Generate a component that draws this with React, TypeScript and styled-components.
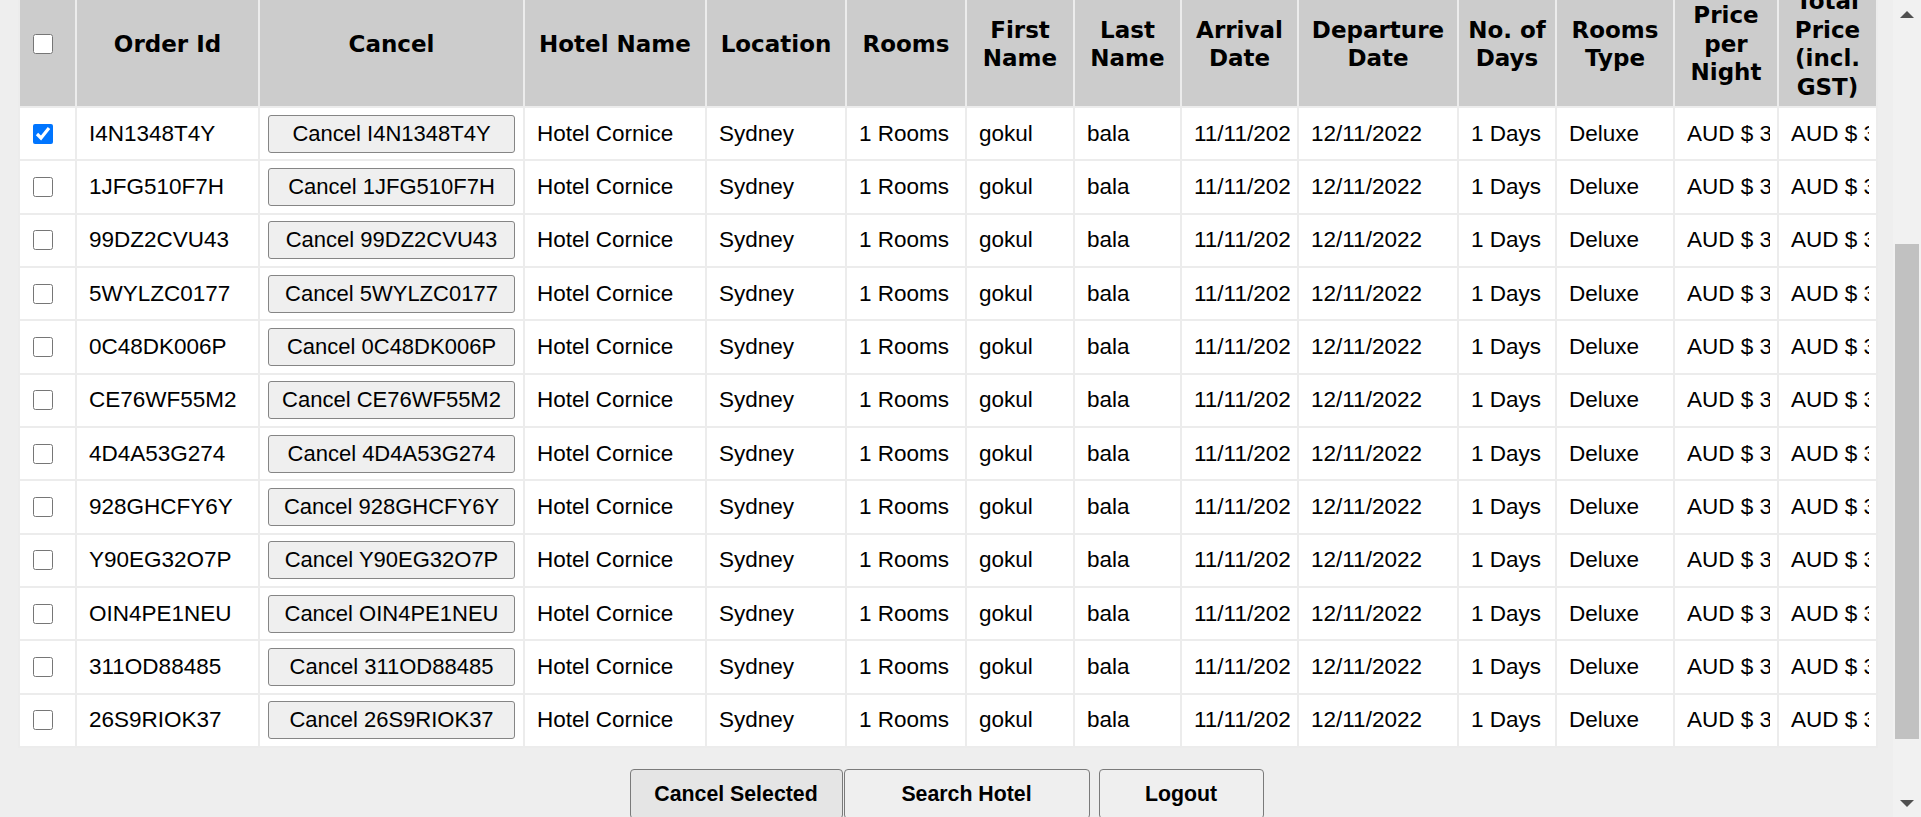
import React, { useLayoutEffect, useRef, useState } from "react";
import styled, { createGlobalStyle } from "styled-components";

const GlobalStyle = createGlobalStyle`
  html, body {
    margin: 0;
    padding: 0;
    height: 100%;
    overflow: hidden;
    background: #eeeeee;
  }
  #root { height: 100%; }
  * { box-sizing: border-box; }
`;

const Page = styled.div`
  display: flex;
  height: 100vh;
  background: #eeeeee;
  font-family: "Liberation Sans", Arial, sans-serif;
  color: #000;
`;

const Viewport = styled.div`
  flex: 1;
  min-width: 0;
  height: 100%;
  overflow-y: scroll;
  overflow-x: hidden;
  scrollbar-width: none;
  &::-webkit-scrollbar {
    display: none;
  }
`;

const Rail = styled.div`
  flex: none;
  width: 28px;
  height: 100%;
  display: flex;
  flex-direction: column;
  background: #f1f1f1;
`;

const RailButton = styled.div`
  flex: none;
  height: 28px;
  display: flex;
  align-items: center;
  justify-content: center;
`;

const Track = styled.div`
  flex: 1;
  position: relative;
`;

const Thumb = styled.div`
  position: absolute;
  left: 2px;
  right: 2px;
  background: #c1c1c1;
`;

const Intro = styled.header`
  height: 335px;
  display: flex;
  align-items: flex-end;
  justify-content: center;
  padding-bottom: 40px;
`;

const Title = styled.h1`
  margin: 0;
  font-size: 40px;
  font-weight: bold;
`;

const TableArea = styled.section`
  padding: 0 17px 0 18px;
`;

const Table = styled.table`
  table-layout: fixed;
  width: 1858px;
  border-collapse: collapse;
  background: #ffffff;
`;

const Col = styled.col<{ $w: number }>`
  width: ${(p) => p.$w}px;
`;

const Th = styled.th<{ $first?: boolean }>`
  background: #cccccc;
  border: 2px solid #ececec;
  font-family: "DejaVu Sans", Verdana, sans-serif;
  font-weight: bold;
  font-size: 23px;
  line-height: 28.5px;
  padding: 7px 8px 5px;
  text-align: ${(p) => (p.$first ? "left" : "center")};
  padding-left: ${(p) => (p.$first ? "13px" : "8px")};
  vertical-align: middle;
`;

const Tr = styled.tr`
  height: 53.35px;
`;

const Td = styled.td<{ $first?: boolean; $button?: boolean }>`
  border: 2px solid #ececec;
  font-size: 22.5px;
  white-space: nowrap;
  vertical-align: middle;
  padding: ${(p) =>
    p.$first ? "0 0 0 13px" : p.$button ? "0 8px 0 8px" : "0 7px 0 12px"};
  line-height: 26px;
`;

const Clip = styled.div`
  overflow: hidden;
  white-space: nowrap;
`;

const Check = styled.input`
  width: 20px;
  height: 20px;
  margin: 0;
  display: block;
`;

const RowButton = styled.button`
  width: 100%;
  height: 38px;
  padding: 0 4px;
  font-family: "Liberation Sans", Arial, sans-serif;
  font-size: 22px;
  color: #000;
  background: #efefef;
  border: 1px solid #858585;
  border-radius: 3px;
  white-space: nowrap;
  overflow: hidden;
`;

const ButtonBar = styled.div`
  display: flex;
  justify-content: center;
  margin-top: 21px;
  padding-bottom: 81px;
`;

const ActionButton = styled.button<{ $w: number; $gap: number; $active?: boolean }>`
  width: ${(p) => p.$w}px;
  height: 50px;
  margin-left: ${(p) => p.$gap}px;
  font-family: "Liberation Sans", Arial, sans-serif;
  font-weight: bold;
  font-size: 21.3px;
  color: #000;
  background: ${(p) => (p.$active ? "#e5e5e5" : "#efefef")};
  border: 1px solid #7a7a7a;
  border-radius: 4px;
  padding: 0;
`;

const widths = [57, 183, 265, 182, 140, 120, 108, 107, 117, 160, 98, 118, 104, 99];

const headers = [
  "Order Id",
  "Cancel",
  "Hotel Name",
  "Location",
  "Rooms",
  "First Name",
  "Last Name",
  "Arrival Date",
  "Departure Date",
  "No. of Days",
  "Rooms Type",
  "Price per Night",
  "Total Price (incl. GST)",
];

const orders = [
  "I4N1348T4Y",
  "1JFG510F7H",
  "99DZ2CVU43",
  "5WYLZC0177",
  "0C48DK006P",
  "CE76WF55M2",
  "4D4A53G274",
  "928GHCFY6Y",
  "Y90EG32O7P",
  "OIN4PE1NEU",
  "311OD88485",
  "26S9RIOK37",
];

const cells = [
  "Hotel Cornice",
  "Sydney",
  "1 Rooms",
  "gokul",
  "bala",
  "11/11/2022",
  "12/11/2022",
  "1 Days",
  "Deluxe",
  "AUD $ 350.00",
  "AUD $ 385.00",
];

const Arrow = ({ down }: { down?: boolean }) => (
  <svg width="14" height="7" viewBox="0 0 14 7">
    <path d={down ? "M0 0 H14 L7 7 Z" : "M7 0 L14 7 H0 Z"} fill="#505050" />
  </svg>
);

export default function App() {
  const viewRef = useRef<HTMLDivElement>(null);
  const headRef = useRef<HTMLTableSectionElement>(null);
  const trackRef = useRef<HTMLDivElement>(null);
  const [thumb, setThumb] = useState({ top: 0, height: 0 });

  useLayoutEffect(() => {
    const v = viewRef.current;
    const h = headRef.current;
    const t = trackRef.current;
    if (!v || !h || !t) return;
    const offset =
      h.getBoundingClientRect().bottom - v.getBoundingClientRect().top + v.scrollTop;
    v.scrollTop = offset - 107;
    const update = () => {
      const trackLen = t.clientHeight;
      const ratio = v.clientHeight / v.scrollHeight;
      const height = Math.max(20, trackLen * ratio);
      const max = v.scrollHeight - v.clientHeight;
      const top = max > 0 ? (v.scrollTop / max) * (trackLen - height) : 0;
      setThumb({ top, height });
    };
    update();
    v.addEventListener("scroll", update);
    return () => v.removeEventListener("scroll", update);
  }, []);

  return (
    <>
      <GlobalStyle />
      <Page>
        <Viewport ref={viewRef}>
          <Intro>
            <Title>My Bookings</Title>
          </Intro>
          <TableArea>
            <Table>
              <colgroup>
                {widths.map((w, i) => (
                  <Col key={i} $w={w} />
                ))}
              </colgroup>
              <thead ref={headRef}>
                <tr>
                  <Th $first>
                    <Check type="checkbox" />
                  </Th>
                  {headers.map((h) => (
                    <Th key={h}>{h}</Th>
                  ))}
                </tr>
              </thead>
              <tbody>
                {orders.map((id, i) => (
                  <Tr key={id}>
                    <Td $first>
                      <Check type="checkbox" defaultChecked={i === 0} />
                    </Td>
                    <Td>
                      <Clip>{id}</Clip>
                    </Td>
                    <Td $button>
                      <RowButton type="button">Cancel {id}</RowButton>
                    </Td>
                    {cells.map((c, j) => (
                      <Td key={j}>
                        <Clip>{c}</Clip>
                      </Td>
                    ))}
                  </Tr>
                ))}
              </tbody>
            </Table>
          </TableArea>
          <ButtonBar>
            <ActionButton type="button" $w={213} $gap={0} $active>
              Cancel Selected
            </ActionButton>
            <ActionButton type="button" $w={246} $gap={1}>
              Search Hotel
            </ActionButton>
            <ActionButton type="button" $w={165} $gap={9}>
              Logout
            </ActionButton>
          </ButtonBar>
        </Viewport>
        <Rail>
          <RailButton>
            <Arrow />
          </RailButton>
          <Track ref={trackRef}>
            <Thumb style={{ top: thumb.top, height: thumb.height }} />
          </Track>
          <RailButton>
            <Arrow down />
          </RailButton>
        </Rail>
      </Page>
    </>
  );
}
